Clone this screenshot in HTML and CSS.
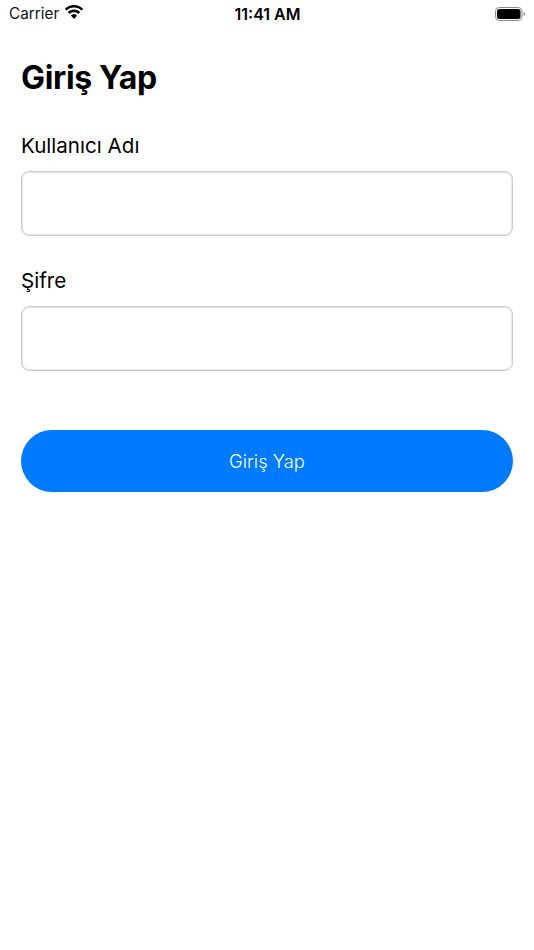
FILE: index.html
```html
<!DOCTYPE html>
<html lang="tr">
<head>
<meta charset="utf-8">
<title>Giriş Yap</title>
<link rel="stylesheet" href="styles.css">
</head>
<body>
<header class="status">
  <div class="status-left">
    <span class="carrier">Carrier</span>
    <svg class="wifi" viewBox="0 0 20 15" width="20" height="15" aria-hidden="true">
      <path d="M10 2.600c2.900 0 5.500 1.100 7.500 3l1.700-1.800C16.700 1.400 13.500 0 10 0S3.300 1.400.8 3.800l1.700 1.800c2-1.900 4.600-3 7.500-3z"/>
      <path d="M10 7.200c1.700 0 3.200.6 4.400 1.700l1.800-1.800C14.500 5.500 12.400 4.600 10 4.600S5.500 5.500 3.800 7.100l1.800 1.800C6.800 7.800 8.300 7.200 10 7.200z"/>
      <path d="M10 9.200c-1.200 0-2.300.5-3.100 1.200L10 14l3.100-3.600c-.8-.7-1.900-1.200-3.100-1.200z"/>
    </svg>
  </div>
  <span class="time">11:41 AM</span>
  <div class="status-right">
    <svg class="battery" viewBox="0 0 31 14" width="31" height="14" aria-hidden="true">
      <rect class="battery-shell" x="0.500" y="0.500" width="26.500" height="13" rx="3.800"/>
      <rect x="2" y="2" width="23.500" height="10" rx="2.500"/>
      <path class="battery-cap" d="M28.500 5v4c.9-.3 1.500-1.100 1.500-2s-.6-1.700-1.500-2z"/>
    </svg>
  </div>
</header>
<main class="login">
  <h1 class="title">Giriş Yap</h1>
  <label class="field-label field-label-first" for="user">Kullanıcı Adı</label>
  <input class="field" id="user" type="text">
  <label class="field-label field-label-second" for="pass">Şifre</label>
  <input class="field" id="pass" type="password">
  <button class="submit" type="button">Giriş Yap</button>
</main>
</body>
</html>
```
FILE: styles.css
```css
* { box-sizing: border-box; }
html, body { margin: 0; padding: 0; }
body {
  width: 534px;
  height: 950px;
  background: #fff;
  color: #000;
  font-family: Inter, "Liberation Sans", sans-serif;
  overflow: hidden;
}
.status {
  height: 28px;
  display: grid;
  grid-template-columns: 1fr auto 1fr;
  align-items: center;
  padding: 0 8px 0 9px;
}
.status-left { display: flex; align-items: center; gap: 5px; }
.carrier { font-size: 15.300px; line-height: 28px; color: #111; }
.wifi { fill: #000; margin-top: -4px; }
.time { font-size: 16px; font-weight: 600; }
.status-right { display: flex; justify-content: flex-end; }
.battery { fill: #000; }
.battery-shell { fill: none; stroke: #8a8a8a; stroke-width: 1; }
.battery-cap { fill: #8a8a8a; }
.login { display: flex; flex-direction: column; padding: 0 21px; }
.title {
  margin: 28px 0 0;
  font-size: 32px;
  line-height: 44px;
  font-weight: 700;
  letter-spacing: -0.350px;
}
.field-label { font-size: 20.600px; line-height: 28px; }
.field-label-first { margin-top: 32px; }
.field-label-second { margin-top: 31px; }
.field {
  display: block;
  width: 100%;
  height: 65px;
  margin-top: 11px;
  border: 1px solid #cccccc;
  border-radius: 8px;
  box-shadow: inset 0 0 0 1px #e6e6e6;
  background: #fff;
  outline: none;
}
.submit {
  height: 62px;
  margin-top: 59px;
  border: 0;
  border-radius: 31px;
  background: #007aff;
  color: #fff;
  font: 300 18.400px Inter, "Liberation Sans", sans-serif;
}
```
